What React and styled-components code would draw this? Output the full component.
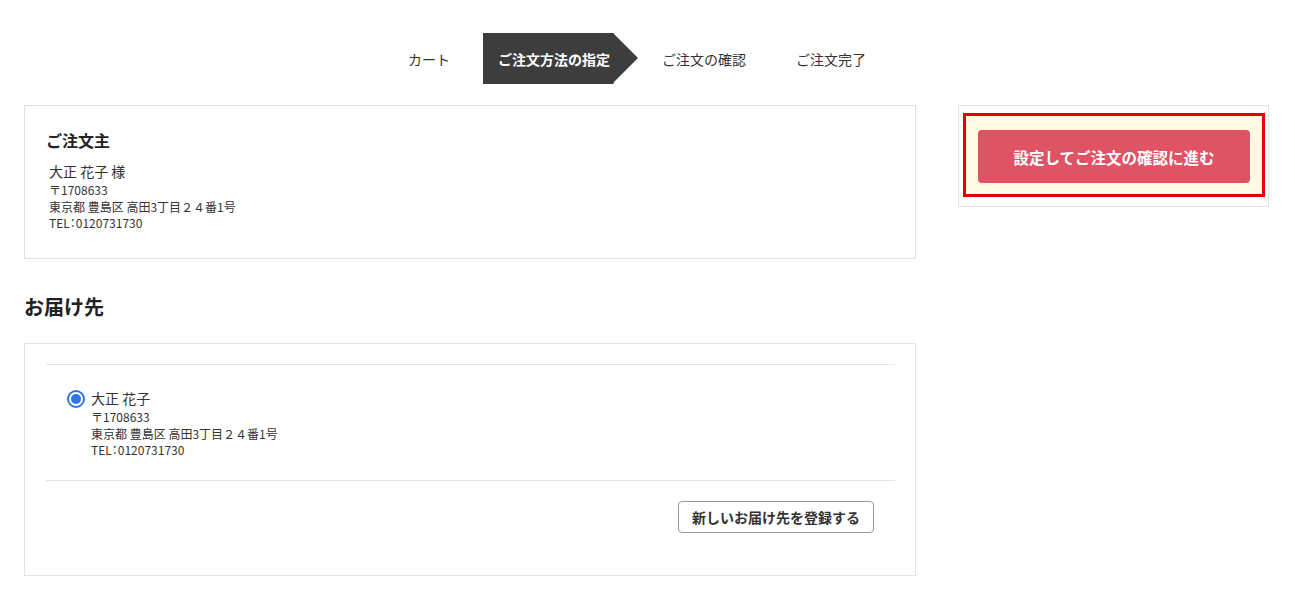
import React from "react";
import styled, { createGlobalStyle } from "styled-components";

const Global = createGlobalStyle`
  html, body { margin: 0; padding: 0; background: #fff; }
  body {
    font-family: "Noto Sans CJK JP", "Noto Sans", sans-serif;
    color: #333;
  }
  * { box-sizing: border-box; }
`;

const Page = styled.div`
  width: 1295px;
  padding: 33px 26px 0 24px;
`;

const Steps = styled.ol`
  list-style: none;
  margin: 0 0 21px 0;
  padding: 0 0 0 369px;
  display: flex;
  align-items: stretch;
  height: 51px;
`;

const Step = styled.li`
  display: flex;
  align-items: center;
  position: relative;
  font-size: 14px;
  padding: ${(p) => (p.$active ? "0 3px 0 15px" : "0 15px")};
  margin-right: ${(p) => p.$mr || 0}px;
  background: ${(p) => (p.$active ? "#3d3d3d" : "transparent")};
  color: ${(p) => (p.$active ? "#fff" : "#333")};
  font-weight: ${(p) => (p.$active ? 700 : 400)};
  border-right: ${(p) => (p.$active ? "1px solid #8a8a8a" : "none")};
  white-space: nowrap;
`;

const Arrow = styled.span`
  position: absolute;
  top: 0;
  left: 100%;
  width: 0;
  height: 0;
  border-top: 25.5px solid transparent;
  border-bottom: 25.5px solid transparent;
  border-left: 25px solid #3d3d3d;
`;

const Main = styled.div`
  display: flex;
  align-items: flex-start;
  gap: 42px;
`;

const LeftCol = styled.div`
  width: 892px;
  display: flex;
  flex-direction: column;
`;

const Card = styled.section`
  border: 1px solid #e3e3e3;
  background: #fff;
  padding: ${(p) => p.$pad || "20px"};
`;

const CardTitle = styled.h3`
  margin: 0 0 9px;
  font-size: 16px;
  line-height: 26px;
  font-weight: 700;
  color: #222;
`;

const Person = styled.div`
  padding-left: ${(p) => p.$indent || 0}px;
`;

const Name = styled.div`
  font-size: 14px;
  line-height: 19px;
  margin-bottom: 1px;
  color: #333;
`;

const Line = styled.div`
  font-size: 12px;
  line-height: 16.5px;
  color: #333;
`;

const Colon = styled.span`
  font-feature-settings: "palt";
`;

const SectionTitle = styled.h2`
  margin: 34px 0 22px;
  font-size: 20px;
  line-height: 28px;
  font-weight: 700;
  color: #222;
`;

const AddressItem = styled.label`
  display: flex;
  align-items: flex-start;
  gap: 6px;
  border-top: 1px solid #e3e3e3;
  border-bottom: 1px solid #e3e3e3;
  padding: 24px 21px 21px 21px;
`;

const Radio = styled.span`
  flex: none;
  width: 18px;
  height: 18px;
  margin-top: 0.5px;
  border-radius: 50%;
  border: 2px solid #2f74e6;
  background: #fff;
  display: flex;
  align-items: center;
  justify-content: center;
  &::after {
    content: "";
    width: 10px;
    height: 10px;
    border-radius: 50%;
    background: #2f74e6;
  }
`;

const Actions = styled.div`
  display: flex;
  justify-content: flex-end;
  padding: 20px 21px 22px;
`;

const GhostButton = styled.button`
  font-family: inherit;
  height: 32px;
  padding: 0 13px;
  font-size: 14px;
  font-weight: 700;
  color: #333;
  background: #fff;
  border: 1px solid #9a9a9a;
  border-radius: 4px;
  cursor: pointer;
`;

const RightCol = styled.aside`
  width: 311px;
  border: 1px solid #e3e3e3;
  background: #fff;
  padding: 7px 3px 9px 4px;
`;

const Highlight = styled.div`
  border: 3px solid #e60000;
  background: #fffbe5;
  padding: 14px 12px 11px 12px;
`;

const PrimaryButton = styled.button`
  width: 100%;
  height: 53px;
  font-family: inherit;
  font-size: 15.5px;
  font-weight: 700;
  color: #fff;
  background: #e05365;
  border: none;
  border-radius: 4px;
  cursor: pointer;
`;

function Address({ name, indent }) {
  return (
    <Person $indent={indent}>
      <Name>{name}</Name>
      <Line>〒1708633</Line>
      <Line>東京都 豊島区 高田3丁目２４番1号</Line>
      <Line>
        TEL<Colon>：</Colon>0120731730
      </Line>
    </Person>
  );
}

export default function App() {
  return (
    <>
      <Global />
      <Page>
        <Steps>
          <Step $mr={18}>カート</Step>
          <Step $active $mr={33}>
            ご注文方法の指定
            <Arrow />
          </Step>
          <Step $mr={20}>ご注文の確認</Step>
          <Step>ご注文完了</Step>
        </Steps>
        <Main>
          <LeftCol>
            <Card $pad="21px 21px 26.5px 21px">
              <CardTitle>ご注文主</CardTitle>
              <Address name="大正 花子 様" indent={3} />
            </Card>
            <SectionTitle>お届け先</SectionTitle>
            <Card $pad="20px 20px 20px 21px">
              <AddressItem>
                <Radio />
                <Address name="大正 花子" />
              </AddressItem>
              <Actions>
                <GhostButton>新しいお届け先を登録する</GhostButton>
              </Actions>
            </Card>
          </LeftCol>
          <RightCol>
            <Highlight>
              <PrimaryButton>設定してご注文の確認に進む</PrimaryButton>
            </Highlight>
          </RightCol>
        </Main>
      </Page>
    </>
  );
}
